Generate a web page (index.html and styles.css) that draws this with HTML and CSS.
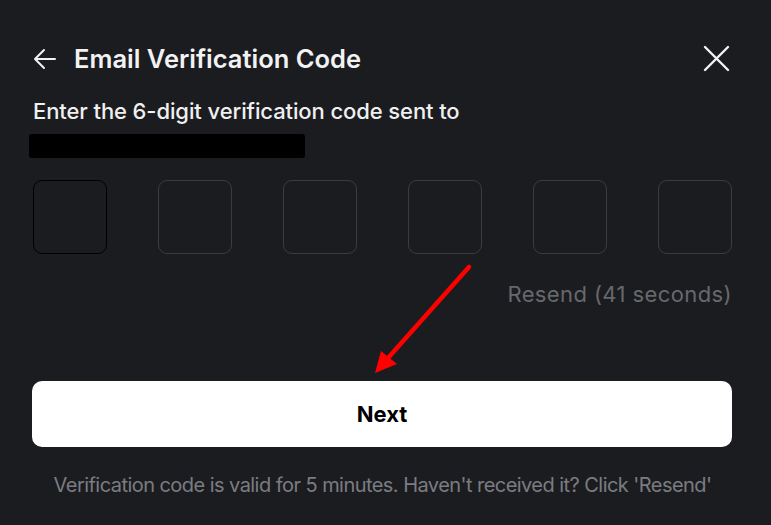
FILE: index.html
```html
<!DOCTYPE html>
<html>
<head>
<meta charset="utf-8">
<link rel="stylesheet" href="styles.css">
</head>
<body>
<div class="modal">
  <div class="header">
    <div class="title-wrap">
      <svg class="back" width="24" height="22" viewBox="0 0 24 22"><path d="M22 11H2M11 2L2 11L11 20" fill="none" stroke="#f2f2f2" stroke-width="2" stroke-linecap="round" stroke-linejoin="round"/></svg>
      <h1 class="title">Email Verification Code</h1>
    </div>
    <svg class="close" width="27" height="27" viewBox="0 0 27 27"><path d="M2 2L25 25M25 2L2 25" fill="none" stroke="#f2f2f2" stroke-width="2.4" stroke-linecap="round"/></svg>
  </div>
  <p class="subtitle">Enter the 6-digit verification code sent to</p>
  <div class="redact"></div>
  <div class="codes">
    <div class="box active"></div>
    <div class="box"></div>
    <div class="box"></div>
    <div class="box"></div>
    <div class="box"></div>
    <div class="box"></div>
  </div>
  <div class="resend">Resend (41 seconds)</div>
  <button class="next">Next</button>
  <p class="note">Verification code is valid for 5 minutes. Haven't received it? Click 'Resend'</p>
  <svg class="annot" width="771" height="525" viewBox="0 0 771 525"><line x1="469" y1="267" x2="388" y2="358" stroke="#ff0000" stroke-width="4.5" stroke-linecap="round"/><polygon points="375,373 381,351 397,364" fill="#ff0000"/></svg>
</div>
</body>
</html>
```
FILE: styles.css
```css
* { box-sizing: border-box; }
html, body { margin: 0; padding: 0; background: #1b1c20; }
body { font-family: Inter, "Noto Sans", sans-serif; width: 771px; height: 525px; overflow: hidden; }
.modal { position: relative; width: 771px; height: 525px; padding: 43px 39px 0 33px; color: #f2f2f2; }
.header { display: flex; justify-content: space-between; align-items: center; height: 32px; }
.title-wrap { display: flex; align-items: center; gap: 17px; }
.back { display: block; }
.title { margin: 0; font-size: 25.5px; font-weight: 600; letter-spacing: 0; line-height: 32px; }
.close { display: block; margin-right: 2px; margin-top: -1px; }
.subtitle { margin: 22px 0 0; font-size: 22px; font-weight: 500; line-height: 28px; letter-spacing: -0.1px; color: #f0f0f0; }
.redact { margin: 9px 0 0 -4px; width: 276px; height: 24px; background: #000; border-radius: 3px; }
.codes { display: flex; justify-content: space-between; margin-top: 22px; }
.box { width: 74px; height: 74px; border: 1px solid #3b3c41; border-radius: 9px; }
.box.active { border-color: #000; }
.resend { margin-top: 26px; text-align: right; font-size: 22px; color: #67686d; line-height: 28px; letter-spacing: 0.4px; }
.next { display: block; width: 700px; height: 66px; margin: 73px 0 0 -1px; background: #fff; border: none; border-radius: 10px; font-family: Inter, sans-serif; font-size: 22px; font-weight: 700; color: #000; }
.note { margin: 25px 0 0; text-align: center; font-size: 20px; color: #7b7c81; letter-spacing: -0.55px; line-height: 26px; }
.annot { position: absolute; left: 0; top: 0; pointer-events: none; }
```
